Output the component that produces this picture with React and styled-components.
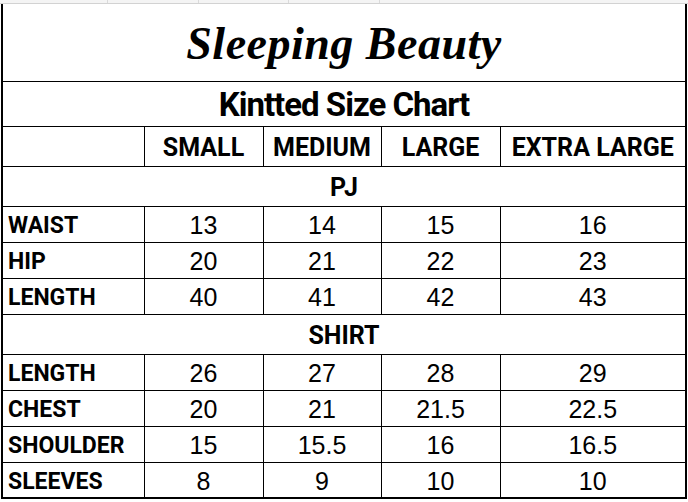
import React from "react";
import styled, { createGlobalStyle } from "styled-components";

const Global = createGlobalStyle`
  html, body { margin: 0; padding: 0; background: #ffffff; }
  body { width: 688px; height: 502px; overflow: hidden; }
`;

const Page = styled.div`
  width: 688px;
  height: 502px;
  background: #ffffff;
  display: flex;
  flex-direction: column;
`;

const GridStrip = styled.div`
  height: 3px;
  background: #f4f4f4;
  border-bottom: 1px solid #d2d2d2;
  display: grid;
  grid-template-columns: 108px 91px 90px 91px 1fr;
`;

const GridTick = styled.span`
  border-right: 1px solid #dadada;
`;

const Sheet = styled.table`
  margin-left: 1px;
  width: 686px;
  border-collapse: collapse;
  table-layout: fixed;
  border-left: 2px solid #000;
  border-right: 2px solid #000;
  border-bottom: 2px solid #000;
  color: #000;
`;

const Row = styled.tr`
  height: ${(p) => p.$h}px;
`;

const Cell = styled.td`
  border: 1px solid #000;
  padding: 3px 0 0 0;
  text-align: ${(p) => (p.$left ? "left" : "center")};
  padding-left: ${(p) => (p.$left ? "5px" : "0")};
  vertical-align: middle;
  white-space: nowrap;
  font-family: ${(p) =>
    p.$bold ? "Roboto, 'Liberation Sans', sans-serif" : "'Liberation Sans', Arial, sans-serif"};
  font-weight: ${(p) => (p.$bold ? 700 : 400)};
  font-size: ${(p) => p.$size || 24}px;
  line-height: 1;
`;

const Brand = styled.td`
  border: 1px solid #000;
  border-top: none;
  text-align: center;
  vertical-align: middle;
  padding: 4px 0 0 0;
  font-family: "Liberation Serif", "DejaVu Serif", serif;
  font-style: italic;
  font-weight: 700;
  font-size: 46px;
  letter-spacing: 0.5px;
  line-height: 1;
`;

const Subtitle = styled.td`
  border: 1px solid #000;
  text-align: center;
  vertical-align: middle;
  padding-top: 2px;
  font-family: "Roboto", sans-serif;
  font-weight: 700;
  font-size: 33px;
  letter-spacing: -1px;
  line-height: 1;
`;

const sizes = ["SMALL", "MEDIUM", "LARGE", "EXTRA LARGE"];

const pj = [
  ["WAIST", "13", "14", "15", "16"],
  ["HIP", "20", "21", "22", "23"],
  ["LENGTH", "40", "41", "42", "43"],
];

const shirt = [
  ["LENGTH", "26", "27", "28", "29"],
  ["CHEST", "20", "21", "21.5", "22.5"],
  ["SHOULDER", "15", "15.5", "16", "16.5"],
  ["SLEEVES", "8", "9", "10", "10"],
];

function DataRows({ rows }) {
  return rows.map((r, i) => (
    <Row $h={36} key={r[0] + i}>
      <Cell $left $bold $size={23}>{r[0]}</Cell>
      {r.slice(1).map((v, j) => (
        <Cell key={j} $size={25}>{v}</Cell>
      ))}
    </Row>
  ));
}

export default function App() {
  return (
    <Page>
      <Global />
      <GridStrip>
        <GridTick />
        <GridTick />
        <GridTick />
        <GridTick />
        <span />
      </GridStrip>
      <Sheet>
        <colgroup>
          <col style={{ width: 142 }} />
          <col style={{ width: 119 }} />
          <col style={{ width: 118 }} />
          <col style={{ width: 119 }} />
          <col />
        </colgroup>
        <tbody>
          <Row $h={77}>
            <Brand colSpan={5}>Sleeping Beauty</Brand>
          </Row>
          <Row $h={45}>
            <Subtitle colSpan={5}>Kintted Size Chart</Subtitle>
          </Row>
          <Row $h={40}>
            <Cell />
            {sizes.map((s) => (
              <Cell key={s} $bold $size={25}>{s}</Cell>
            ))}
          </Row>
          <Row $h={40}>
            <Cell colSpan={5} $bold $size={25}>PJ</Cell>
          </Row>
          <DataRows rows={pj} />
          <Row $h={40}>
            <Cell colSpan={5} $bold $size={25}>SHIRT</Cell>
          </Row>
          <DataRows rows={shirt} />
        </tbody>
      </Sheet>
    </Page>
  );
}
